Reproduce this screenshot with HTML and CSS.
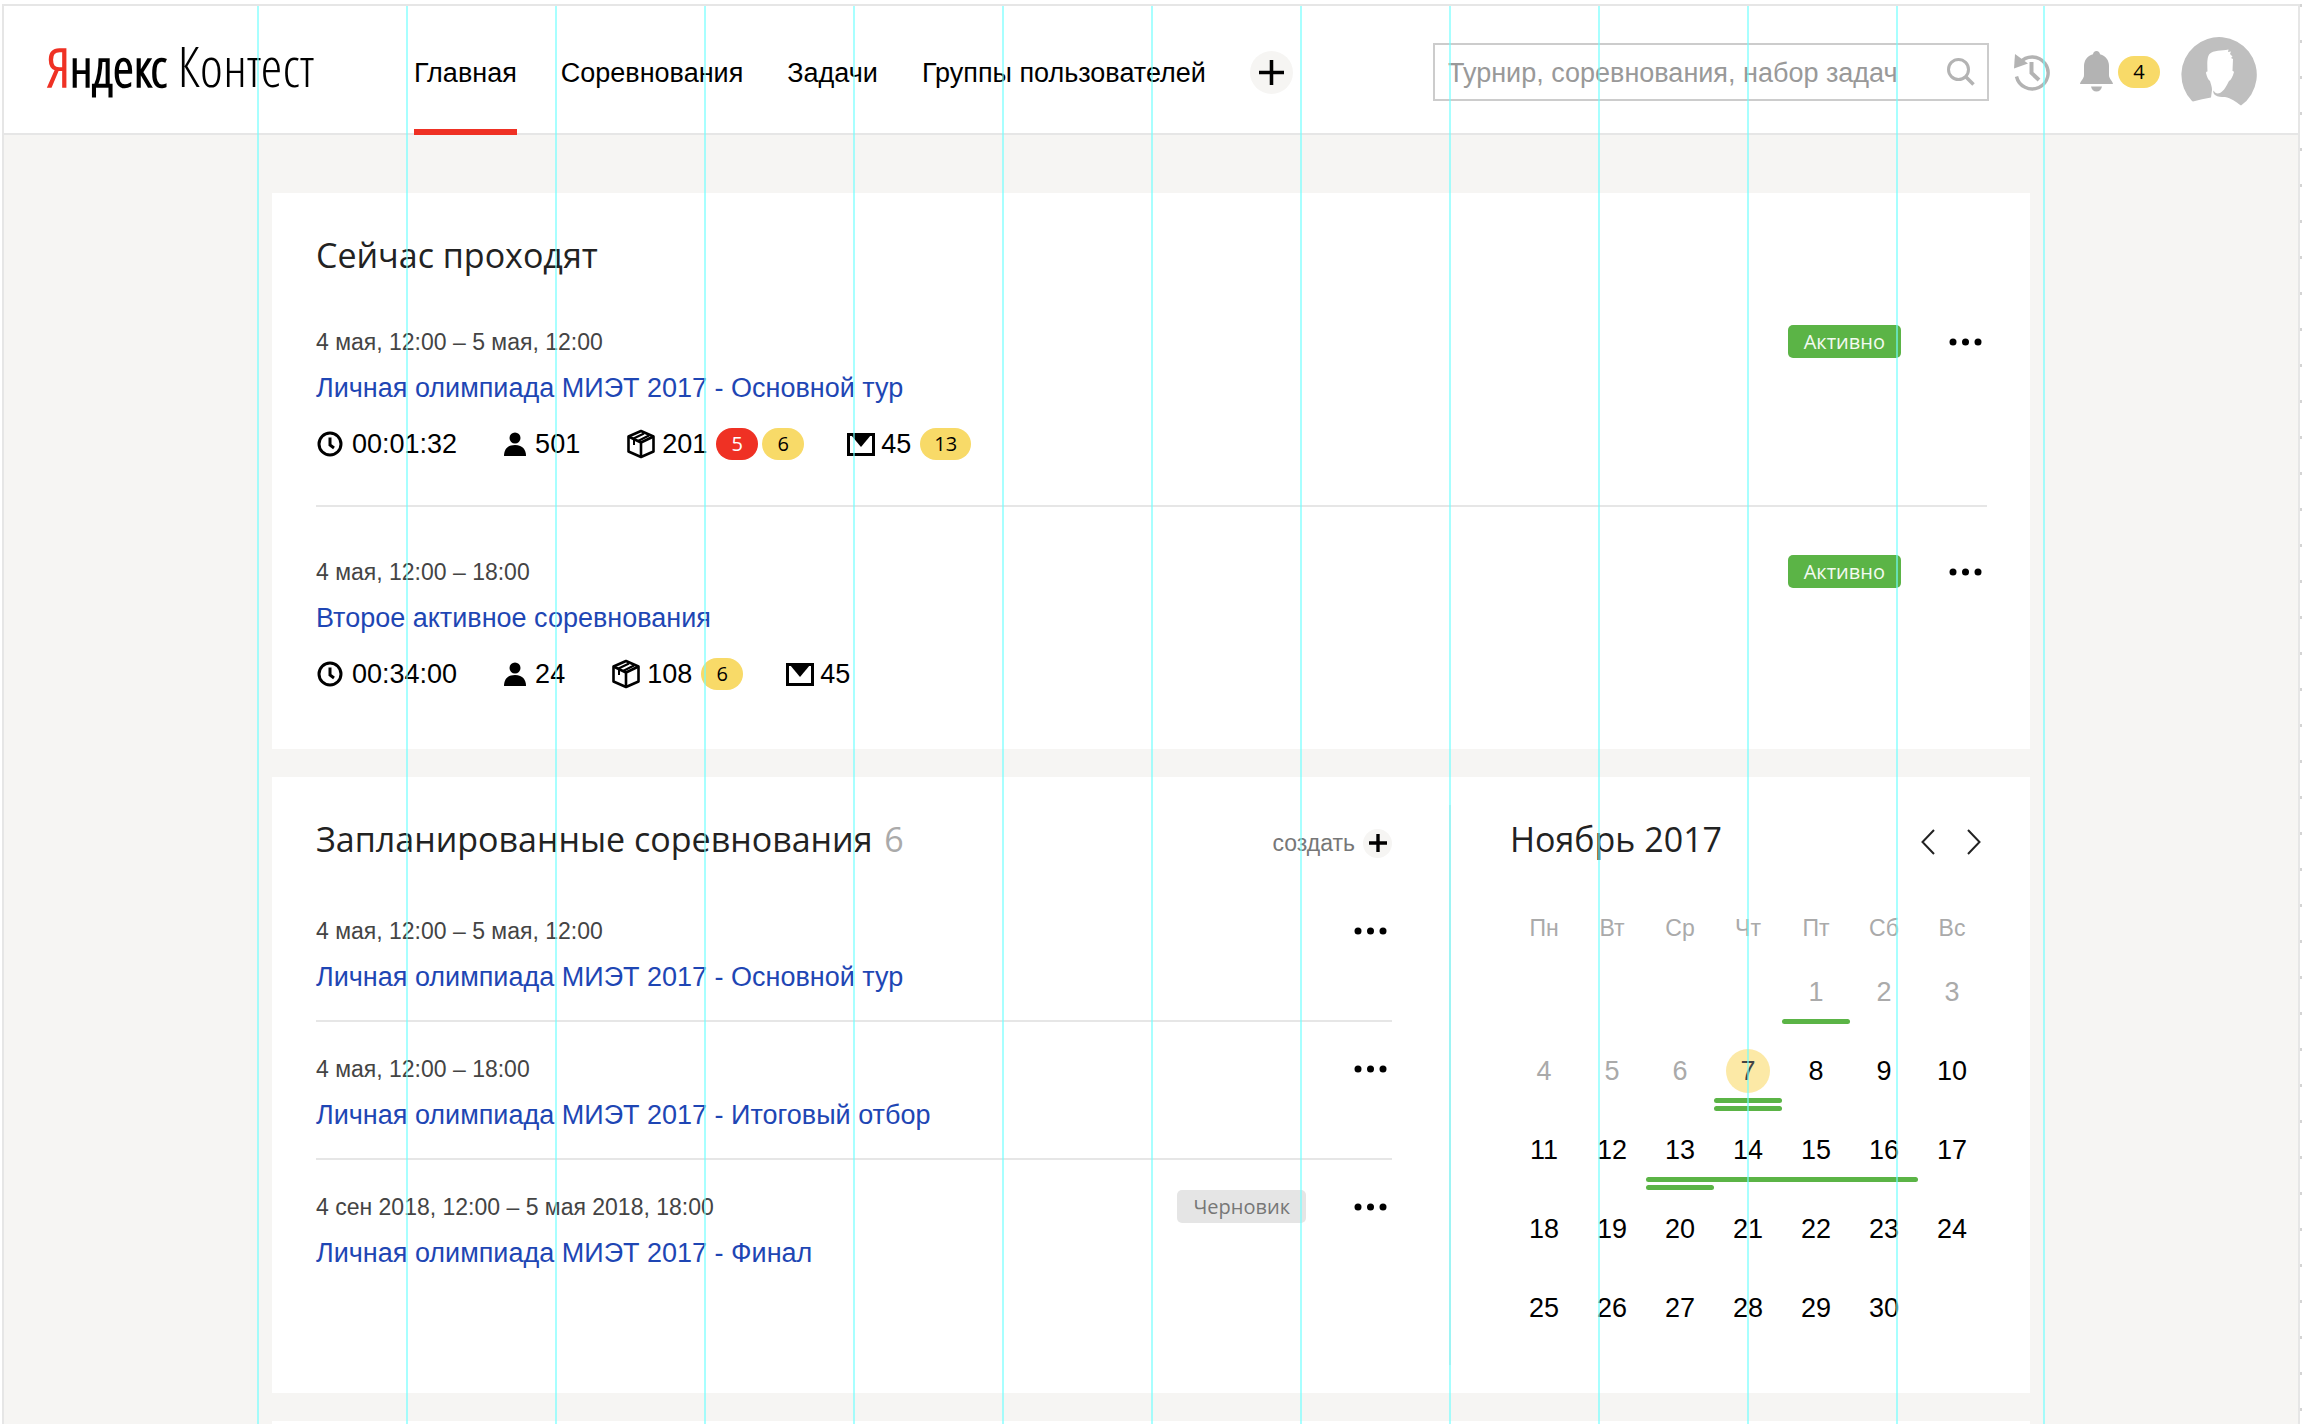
FILE: index.html
```html
<!DOCTYPE html>
<html lang="ru">
<head>
<meta charset="utf-8">
<meta name="viewport" content="width=device-width, initial-scale=1">
<title>Яндекс Контест</title>
<link rel="stylesheet" href="styles.css">
</head>
<body>
<svg class="sprite" aria-hidden="true">
  <symbol id="i-clock" viewBox="0 0 26 26"><circle cx="13" cy="13" r="11" fill="none" stroke="#000" stroke-width="3"/><path d="M13 6.500v7.500l4 3" fill="none" stroke="#000" stroke-width="3"/></symbol>
  <symbol id="i-user" viewBox="0 0 22 24"><circle cx="11" cy="6" r="5.500"/><path d="M0 24c0-6 3-11 11-11s11 5 11 11z"/></symbol>
  <symbol id="i-box" viewBox="0 0 30 30"><g fill="none" stroke="#000" stroke-width="2.600" stroke-linejoin="round"><path d="M15 2 27.500 7.500v15L15 28 2.500 22.500v-15z"/><path d="M2.500 7.500 15 13.500 27.500 7.500M15 13.500V28"/><path d="M7.500 9.500 18 4.500M12 12 23 6.500M8 10v6" stroke-width="2"/></g></symbol>
  <symbol id="i-mail" viewBox="0 0 28 23"><path d="M1.500 1.500h25v20h-25z" fill="none" stroke="#000" stroke-width="3"/><path d="M4 2h20L14 14z"/></symbol>
  <symbol id="i-plus" viewBox="0 0 24 24"><path d="M12 0v24M0 12h24" stroke="#000" stroke-width="3.400"/></symbol>
  <symbol id="i-plus-bold" viewBox="0 0 24 24"><path d="M12 0v24M0 12h24" stroke="#000" stroke-width="4.500"/></symbol>
  <symbol id="i-dots" viewBox="0 0 34 8"><circle cx="4" cy="4" r="3.500"/><circle cx="16.500" cy="4" r="3.500"/><circle cx="29" cy="4" r="3.500"/></symbol>
</svg>

<div class="page">
  <header class="header">
    <a class="logo" href="#"><span class="logo-brand"><span class="logo-ya">Я</span>ндекс</span> <span class="logo-name">Контест</span></a>
    <nav class="nav">
      <a class="nav-link nav-link-active" href="#">Главная</a>
      <a class="nav-link" href="#">Соревнования</a>
      <a class="nav-link" href="#">Задачи</a>
      <a class="nav-link" href="#">Группы пользователей</a>
      <button class="plus plus-large" type="button" aria-label="Добавить"><svg><use href="#i-plus"/></svg></button>
    </nav>
    <form class="search" role="search">
      <input class="search-input" type="search" aria-label="Поиск" placeholder="Турнир, соревнования, набор задач">
      <button class="search-button" type="submit" aria-label="Найти"><svg width="28" height="28" viewBox="0 0 28 28" fill="none" stroke="#b3b3b3" stroke-width="3"><circle cx="11.500" cy="11.500" r="10"/><path d="m18.500 18.500 8 8" stroke-width="3.600"/></svg></button>
    </form>
    <div class="tools">
      <button class="tool tool-history" type="button" aria-label="История"><svg width="36" height="38" viewBox="0 0 36 38"><path d="M6 9.500A16 16 0 1 1 2.500 23.500" fill="none" stroke="#b3b3b3" stroke-width="3.400"/><path d="M1 1 14 10.500 0 15.500z" fill="#b3b3b3"/><path d="M17.500 9v11l7.500 7" fill="none" stroke="#b3b3b3" stroke-width="4"/></svg></button>
      <button class="tool tool-bell" type="button" aria-label="Уведомления"><svg width="33" height="41" viewBox="0 0 33 41" fill="#b3b3b3"><path d="M16.500 0c2 0 3.300 1.400 3.500 3.200C26 5 29 9.500 29 15v9c0 4 3.500 5.500 4 9H0c.5-3.500 4-5 4-9v-9C4 9.500 7 5 13 3.200 13.200 1.400 14.500 0 16.500 0zM11 35.500h11c-.5 3-2.700 5-5.500 5s-5-2-5.500-5z"/></svg><span class="pill pill-yellow">4</span></button>
      <a class="avatar" href="#" aria-label="Профиль"><svg width="76" height="70" viewBox="0 0 76 70"><path d="M11 64A37.700 37.700 0 1 1 60 68.500C55 65 50 61 44 60c-4 0-7 0-10-2-1.500-1.500-2-3-1.500-4.500C34 56 36 57 39 56c4-2 7-8 9-12 2-1 3.500-4 5-9-.5-1-1-1-1.500-1l.5-12-2-1 1.500-1.500-2.500-2.500 1-2.500-3 .5.500-2.500c-7 1.500-15 .5-19 4.500-2 2.500-2.500 7-2 17.500-1 0-1.500.5-1.500 1.500 1 4 2 6.500 4 8 1 3.500 2 6 2 9l-1 7.500c-6 1-12 2.500-18 4z" fill="#bfbfbf"/></svg></a>
    </div>
  </header>

  <main class="content">
    <section class="card card-active">
      <h2 class="title">Сейчас проходят</h2>
      <ul class="events">
        <li class="event event-live">
          <div class="event-top"><span class="date">4 мая, 12:00 – 5 мая, 12:00</span><span class="badge badge-green">Активно</span><button class="more" type="button" aria-label="Ещё"><svg><use href="#i-dots"/></svg></button></div>
          <a class="event-link" href="#">Личная олимпиада МИЭТ 2017 - Основной тур</a>
          <div class="stats">
            <span class="stat"><svg class="i-clock"><use href="#i-clock"/></svg>00:01:32</span>
            <span class="stat"><svg class="i-user"><use href="#i-user"/></svg>501</span>
            <span class="stat"><svg class="i-box"><use href="#i-box"/></svg>201<span class="pills"><span class="pill pill-red">5</span><span class="pill pill-yellow">6</span></span></span>
            <span class="stat"><svg class="i-mail"><use href="#i-mail"/></svg>45<span class="pills"><span class="pill pill-yellow">13</span></span></span>
          </div>
        </li>
        <li class="event event-live">
          <div class="event-top"><span class="date">4 мая, 12:00 – 18:00</span><span class="badge badge-green">Активно</span><button class="more" type="button" aria-label="Ещё"><svg><use href="#i-dots"/></svg></button></div>
          <a class="event-link" href="#">Второе активное соревнования</a>
          <div class="stats">
            <span class="stat"><svg class="i-clock"><use href="#i-clock"/></svg>00:34:00</span>
            <span class="stat"><svg class="i-user"><use href="#i-user"/></svg>24</span>
            <span class="stat"><svg class="i-box"><use href="#i-box"/></svg>108<span class="pills"><span class="pill pill-yellow">6</span></span></span>
            <span class="stat"><svg class="i-mail"><use href="#i-mail"/></svg>45</span>
          </div>
        </li>
      </ul>
    </section>

    <div class="card card-split">
      <section class="planned">
        <div class="planned-head">
          <h2 class="title">Запланированные соревнования <span class="count">6</span></h2>
          <button class="create" type="button">создать <span class="plus"><svg><use href="#i-plus-bold"/></svg></span></button>
        </div>
        <ul class="events">
          <li class="event">
            <div class="event-top"><span class="date">4 мая, 12:00 – 5 мая, 12:00</span><button class="more" type="button" aria-label="Ещё"><svg><use href="#i-dots"/></svg></button></div>
            <a class="event-link" href="#">Личная олимпиада МИЭТ 2017 - Основной тур</a>
          </li>
          <li class="event">
            <div class="event-top"><span class="date">4 мая, 12:00 – 18:00</span><button class="more" type="button" aria-label="Ещё"><svg><use href="#i-dots"/></svg></button></div>
            <a class="event-link" href="#">Личная олимпиада МИЭТ 2017 - Итоговый отбор</a>
          </li>
          <li class="event">
            <div class="event-top"><span class="date">4 сен 2018, 12:00 – 5 мая 2018, 18:00</span><span class="badge badge-grey">Черновик</span><button class="more" type="button" aria-label="Ещё"><svg><use href="#i-dots"/></svg></button></div>
            <a class="event-link" href="#">Личная олимпиада МИЭТ 2017 - Финал</a>
          </li>
        </ul>
      </section>
      <section class="calendar">
        <div class="calendar-head">
          <h2 class="title">Ноябрь 2017</h2>
          <div class="arrows">
            <button class="arrow" type="button" aria-label="Предыдущий месяц"><svg width="14" height="26" viewBox="0 0 14 26"><path d="M13 1 1.500 13 13 25"/></svg></button>
            <button class="arrow" type="button" aria-label="Следующий месяц"><svg width="14" height="26" viewBox="0 0 14 26"><path d="M1 1 12.500 13 1 25"/></svg></button>
          </div>
        </div>
        <table class="month">
          <thead><tr><th>Пн</th><th>Вт</th><th>Ср</th><th>Чт</th><th>Пт</th><th>Сб</th><th>Вс</th></tr></thead>
          <tbody>
            <tr><td></td><td></td><td></td><td></td><td class="past"><span class="day">1</span><i class="bar bar-start bar-end"></i></td><td class="past"><span class="day">2</span></td><td class="past"><span class="day">3</span></td></tr>
            <tr><td class="past"><span class="day">4</span></td><td class="past"><span class="day">5</span></td><td class="past"><span class="day">6</span></td><td class="today"><span class="day">7</span><i class="bar bar-start bar-end"></i><i class="bar bar-start bar-end"></i></td><td><span class="day">8</span></td><td><span class="day">9</span></td><td><span class="day">10</span></td></tr>
            <tr><td><span class="day">11</span></td><td><span class="day">12</span></td><td><span class="day">13</span><i class="bar bar-start"></i><i class="bar bar-start bar-end"></i></td><td><span class="day">14</span><i class="bar"></i></td><td><span class="day">15</span><i class="bar"></i></td><td><span class="day">16</span><i class="bar bar-end"></i></td><td><span class="day">17</span></td></tr>
            <tr><td><span class="day">18</span></td><td><span class="day">19</span></td><td><span class="day">20</span></td><td><span class="day">21</span></td><td><span class="day">22</span></td><td><span class="day">23</span></td><td><span class="day">24</span></td></tr>
            <tr><td><span class="day">25</span></td><td><span class="day">26</span></td><td><span class="day">27</span></td><td><span class="day">28</span></td><td><span class="day">29</span></td><td><span class="day">30</span></td><td></td></tr>
          </tbody>
        </table>
      </section>
    </div>

    <div class="card card-next"></div>
  </main>

  <div class="guides" aria-hidden="true"><i></i><i></i><i></i><i></i><i></i><i></i><i></i><i></i><i></i><i></i><i></i><i></i></div>
</div>
</body>
</html>
```
FILE: styles.css
```css
* {
  box-sizing: border-box;
}

body {
  margin: 0;
  min-height: 100vh;
  display: flex;
  padding: 4px 0 0 2px;
  background: #fff;
  color: #000;
  font-family: "Liberation Sans", Arial, sans-serif;
  font-size: 27px;
  line-height: 32px;
}

/* ruler ticks along the right edge */
body::after {
  content: "";
  flex: 0 0 2px;
  background: repeating-linear-gradient(#d4d4d4 0 3px, #fff 3px 36px);
}

button {
  border: 0;
  padding: 0;
  background: none;
  color: inherit;
  font: inherit;
  display: flex;
  align-items: center;
  cursor: pointer;
}

a {
  color: inherit;
  text-decoration: none;
}

svg {
  display: block;
}

.sprite {
  position: absolute;
  width: 0;
  height: 0;
}

.page {
  position: relative;
  flex: 1;
  display: flex;
  flex-direction: column;
  border: 2px solid #e6e6e6;
  border-bottom: 0;
  background: #f6f5f3;
}

/* header */
.header {
  display: flex;
  align-items: center;
  height: 129px;
  padding: 4px 41px 0 43px;
  background: #fff;
  border-bottom: 2px solid #e6e6e6;
}

.logo {
  width: 367px;
  padding-bottom: 12px;
  font-family: "Open Sans Condensed Light", "Open Sans Condensed", "Open Sans", sans-serif;
  font-size: 56px;
  line-height: 64px;
  white-space: nowrap;
}

.logo-brand {
  font-size: 53px;
  font-weight: 700;
}

.logo-ya {
  color: #ef3124;
}

.logo-name {
  font-weight: 300;
}

.nav {
  display: flex;
  align-items: center;
  align-self: stretch;
  gap: 44px;
  margin-bottom: -2px;
}

.nav-link {
  display: flex;
  align-items: center;
  height: 100%;
  padding-top: 6px;
  border-bottom: 6px solid transparent;
  white-space: nowrap;
}

.nav-link-active {
  border-bottom-color: #ef3124;
}

.plus {
  display: flex;
  align-items: center;
  justify-content: center;
  width: 29px;
  height: 29px;
  border-radius: 50%;
  background: #f6f5f3;
}

.plus svg {
  width: 18px;
  height: 18px;
}

.plus-large {
  width: 43px;
  height: 43px;
}

.plus-large svg {
  width: 25px;
  height: 25px;
}

.search {
  display: flex;
  align-items: center;
  width: 556px;
  height: 58px;
  margin-left: auto;
  padding: 0 12px 0 13px;
  border: 2px solid #ccc;
}

.search-input {
  flex: 1;
  min-width: 0;
  border: 0;
  padding: 2px 0 0;
  background: none;
  outline: 0;
  font: inherit;
}

.search-input::placeholder {
  color: #999;
  opacity: 1;
}

.tools {
  display: flex;
  align-items: center;
  padding-left: 25px;
}

.tool-history {
  margin-right: 30px;
}

.tool-bell {
  gap: 5px;
  margin-right: 21px;
}

/* counters */
.pill {
  min-width: 42px;
  height: 32px;
  padding: 0 14px;
  border-radius: 16px;
  font-family: "Open Sans", sans-serif;
  font-size: 20px;
  line-height: 32px;
  text-align: center;
}

.pill-yellow {
  background: #f8da68;
}

.pill-red {
  background: #ef3124;
  color: #fff;
}

.pills {
  display: flex;
  gap: 4px;
  margin: 0 -3px 0 3px;
}

/* cards */
.content {
  flex: 1;
  display: flex;
  flex-direction: column;
  gap: 28px;
  width: 100%;
  max-width: 1758px;
  margin: 0 auto;
  padding-top: 58px;
}

.card {
  background: #fff;
}

.card-active {
  padding: 40px 43px 14px 44px;
}

.card-split {
  display: flex;
  padding: 28px 43px 28px 44px;
}

.card-next {
  flex: 1;
  min-height: 3px;
}

.title {
  margin: 0;
  color: #222;
  font-family: "Open Sans", sans-serif;
  font-size: 34px;
  line-height: 44px;
  font-weight: 400;
  white-space: nowrap;
}

.count {
  margin-left: 3px;
  color: #aaa;
}

/* contest lists */
.events {
  list-style: none;
  margin: 0;
  padding: 0;
}

.event {
  padding: 30px 0 27px;
}

.event + .event {
  border-top: 2px solid #e6e6e6;
}

.event-live {
  padding: 48px 0 45px;
}

.event-top {
  display: flex;
  align-items: center;
  height: 33px;
  margin-bottom: 14px;
}

.date {
  flex: 1;
  color: #444;
  font-size: 23px;
}

.event-link {
  display: block;
  color: #1e46b4;
}

.more {
  padding: 8px 4px 8px 0;
}

.more svg {
  width: 34px;
  height: 8px;
}

.badge {
  margin-right: 48px;
  padding: 0 16px;
  border-radius: 5px;
  font-family: "Open Sans", sans-serif;
  font-size: 20px;
  line-height: 33px;
}

.badge-green {
  background: #5bb446;
  color: #f3faf1;
}

.badge-grey {
  background: #e5e5e5;
  color: #777;
}

.stats {
  display: flex;
  gap: 46px;
  margin-top: 24px;
}

.stat {
  display: flex;
  align-items: center;
  gap: 6px;
  height: 32px;
}

.i-clock {
  width: 28px;
  height: 26px;
  margin-right: 2px;
}

.i-user {
  width: 24px;
  height: 24px;
  margin-right: 2px;
}

.i-box {
  width: 30px;
  height: 30px;
}

.i-mail {
  width: 28px;
  height: 23px;
}

/* planned contests */
.planned {
  flex: 1;
  padding: 12px 57px 0 0;
}

.planned-head {
  display: flex;
  align-items: center;
  justify-content: space-between;
  margin-bottom: 23px;
}

.create {
  gap: 8px;
  padding-top: 8px;
  color: #777;
  font-size: 23px;
}

/* calendar */
.calendar {
  width: 538px;
  height: 560px;
  padding: 12px 0 0 59px;
  border-left: 2px solid #e6e6e6;
}

.calendar-head {
  display: flex;
  align-items: center;
  justify-content: space-between;
  padding-right: 6px;
}

.arrows {
  display: flex;
  gap: 32px;
  padding-top: 5px;
}

.arrow path {
  fill: none;
  stroke: #222;
  stroke-width: 2;
}

.month {
  width: 476px;
  margin-top: 51px;
  border-collapse: collapse;
  table-layout: fixed;
}

.month th {
  height: 58px;
  padding: 0;
  vertical-align: top;
  color: #aaa;
  font-size: 23px;
  font-weight: 400;
}

.month td {
  height: 79px;
  padding: 0;
  vertical-align: top;
  text-align: center;
}

.day {
  display: block;
  width: 44px;
  margin: 0 auto 5px;
  border-radius: 50%;
  line-height: 44px;
}

.past {
  color: #aaa;
}

.today .day {
  background: #fce9a6;
  color: #444;
}

.bar {
  display: block;
  height: 5px;
  margin-bottom: 3px;
  background: #5bb446;
}

.bar-start {
  border-top-left-radius: 3px;
  border-bottom-left-radius: 3px;
}

.bar-end {
  border-top-right-radius: 3px;
  border-bottom-right-radius: 3px;
}

/* column guides drawn over the layout */
.guides {
  position: absolute;
  top: 0;
  bottom: 0;
  left: 0;
  right: 0;
  max-width: 1788px;
  margin: 0 auto;
  display: grid;
  grid-template-columns: repeat(12, 1fr);
  pointer-events: none;
}

.guides i {
  border-left: 2px solid rgba(110, 255, 255, 0.6);
}

.guides i:last-child {
  border-right: 2px solid rgba(110, 255, 255, 0.6);
}
```
